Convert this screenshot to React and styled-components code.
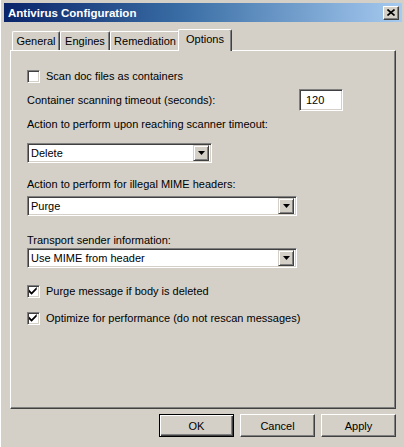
import React from "react";
import styled, { createGlobalStyle } from "styled-components";

const GlobalStyle = createGlobalStyle`
  html, body {
    margin: 0;
    padding: 0;
    background: #d4d0c8;
  }
  body {
    font-family: "Liberation Sans", Arial, sans-serif;
    font-size: 11px;
    color: #000;
  }
`;

const Window = styled.div`
  width: 404px;
  height: 447px;
  box-sizing: border-box;
  padding: 3px 2px 0 3px;
  background: #d4d0c8;
  border-left: 1px solid #fff;
  display: flex;
  flex-direction: column;
`;

const TitleBar = styled.div`
  height: 19px;
  display: flex;
  align-items: center;
  justify-content: space-between;
  padding: 0 3px 0 4px;
  background: linear-gradient(to right, #0a246a 0%, #3a6ea5 45%, #a6caf0 100%);
  color: #fff;
  font-weight: bold;
  font-size: 11.5px;
`;

const CloseButton = styled.div`
  width: 16px;
  height: 14px;
  box-sizing: border-box;
  background: #d4d0c8;
  border: 1px solid;
  border-color: #fff #404040 #404040 #fff;
  box-shadow: inset -1px -1px 0 #808080;
  display: flex;
  align-items: center;
  justify-content: center;
`;

const Body = styled.div`
  flex: 1;
  display: flex;
  flex-direction: column;
  padding: 7px 6px 0 6px;
`;

const TabRow = styled.div`
  display: flex;
  align-items: flex-end;
  height: 21px;
  padding-left: 2px;
  position: relative;
  z-index: 1;
`;

const Tab = styled.div`
  box-sizing: border-box;
  width: ${(p) => p.$w}px;
  height: ${(p) => (p.$active ? "22px" : "19px")};
  margin-bottom: ${(p) => (p.$active ? "-1px" : "0")};
  margin-left: ${(p) => (p.$active ? "-2px" : "0")};
  padding-bottom: ${(p) => (p.$active ? "3px" : "0")};
  display: flex;
  align-items: center;
  justify-content: center;
  background: #d4d0c8;
  border-top: 1px solid #fff;
  border-left: 1px solid #fff;
  border-right: 1px solid #404040;
  box-shadow: inset -1px 0 0 #808080;
  border-radius: 2px 2px 0 0;
  font-size: 11px;
  position: relative;
  z-index: ${(p) => (p.$active ? 2 : 1)};
`;

const Panel = styled.div`
  height: 359px;
  box-sizing: border-box;
  border: 1px solid;
  border-color: #fff #404040 #404040 #fff;
  box-shadow: inset -1px -1px 0 #808080;
  padding: 14px 16px 0 16px;
  display: flex;
  flex-direction: column;
`;

const CheckRow = styled.label`
  display: flex;
  align-items: center;
  gap: 6px;
  height: 14px;
  margin-top: ${(p) => p.$mt || 0}px;
`;

const Box = styled.span`
  width: 13px;
  height: 13px;
  box-sizing: border-box;
  background: #fff;
  border: 1px solid;
  border-color: #808080 #fff #fff #808080;
  box-shadow: inset 1px 1px 0 #404040, inset -1px -1px 0 #d4d0c8;
  display: flex;
  align-items: center;
  justify-content: center;
`;

const FieldRow = styled.div`
  display: flex;
  align-items: center;
  justify-content: space-between;
  margin-top: ${(p) => p.$mt || 0}px;
`;

const Label = styled.div`
  line-height: 14px;
  height: 14px;
  margin-top: ${(p) => p.$mt || 0}px;
`;

const TextBox = styled.div`
  width: 44px;
  height: 22px;
  box-sizing: border-box;
  background: #fff;
  border: 1px solid;
  border-color: #808080 #fff #fff #808080;
  box-shadow: inset 1px 1px 0 #404040, inset -1px -1px 0 #d4d0c8;
  padding: 4px 0 0 6px;
  margin-right: 36px;
`;

const Select = styled.div`
  width: ${(p) => p.$w}px;
  height: 20px;
  box-sizing: border-box;
  background: #fff;
  border: 1px solid;
  border-color: #808080 #fff #fff #808080;
  box-shadow: inset 1px 1px 0 #404040, inset -1px -1px 0 #d4d0c8;
  display: flex;
  align-items: center;
  justify-content: space-between;
  padding: 0 2px 0 3px;
  margin-top: ${(p) => p.$mt || 0}px;
`;

const Arrow = styled.span`
  width: 16px;
  height: 16px;
  box-sizing: border-box;
  background: #d4d0c8;
  border: 1px solid;
  border-color: #d4d0c8 #404040 #404040 #d4d0c8;
  box-shadow: inset 1px 1px 0 #fff, inset -1px -1px 0 #808080;
  display: flex;
  align-items: center;
  justify-content: center;
`;

const Footer = styled.div`
  display: flex;
  justify-content: flex-end;
  gap: 6px;
  padding: 5px 0 0 0;
`;

const Button = styled.div`
  width: 75px;
  height: 23px;
  box-sizing: border-box;
  display: flex;
  align-items: center;
  justify-content: center;
  background: #d4d0c8;
  font-size: 11px;
  border: 1px solid;
  border-color: ${(p) => (p.$default ? "#000" : "#fff #404040 #404040 #fff")};
  box-shadow: ${(p) =>
    p.$default
      ? "inset 1px 1px 0 #fff, inset -1px -1px 0 #404040, inset -2px -2px 0 #808080"
      : "inset -1px -1px 0 #808080"};
`;

const Tick = () => (
  <svg width="9" height="9" viewBox="0 0 7 7">
    <path d="M0 2 L2 4 L6 0 L6 2 L2 6 L0 4 Z" fill="#000" />
  </svg>
);

const DownArrow = () => (
  <svg width="7" height="4" viewBox="0 0 7 4">
    <path d="M0 0 H7 L3.5 4 Z" fill="#000" />
  </svg>
);

const Check = ({ checked, children, mt }) => (
  <CheckRow $mt={mt}>
    <Box>{checked && <Tick />}</Box>
    {children}
  </CheckRow>
);

const Dropdown = ({ w, mt, children }) => (
  <Select $w={w} $mt={mt}>
    <span>{children}</span>
    <Arrow>
      <DownArrow />
    </Arrow>
  </Select>
);

const tabs = [
  { name: "General", w: 48 },
  { name: "Engines", w: 50 },
  { name: "Remediation", w: 70 },
  { name: "Options", w: 54, active: true },
];

export default function App() {
  return (
    <>
      <GlobalStyle />
      <Window>
        <TitleBar>
          <span>Antivirus Configuration</span>
          <CloseButton>
            <svg width="8" height="7" viewBox="0 0 8 7">
              <path d="M0.5 0.5 L7.5 6.5 M7.5 0.5 L0.5 6.5" stroke="#000" strokeWidth="1.6" />
            </svg>
          </CloseButton>
        </TitleBar>
        <Body>
          <TabRow>
            {tabs.map((t) => (
              <Tab key={t.name} $w={t.w} $active={t.active}>
                {t.name}
              </Tab>
            ))}
          </TabRow>
          <Panel>
            <Check mt={4}>Scan doc files as containers</Check>
            <FieldRow $mt={6}>
              <span>Container scanning timeout (seconds):</span>
              <TextBox>120</TextBox>
            </FieldRow>
            <Label $mt={6}>Action to perform upon reaching scanner timeout:</Label>
            <Dropdown w={185} mt={12}>Delete</Dropdown>
            <Label $mt={14}>Action to perform for illegal MIME headers:</Label>
            <Dropdown w={270} mt={5}>Purge</Dropdown>
            <Label $mt={17}>Transport sender information:</Label>
            <Dropdown w={270} mt={1}>Use MIME from header</Dropdown>
            <Check checked mt={16}>Purge message if body is deleted</Check>
            <Check checked mt={13}>Optimize for performance (do not rescan messages)</Check>
          </Panel>
          <Footer>
            <Button $default>OK</Button>
            <Button>Cancel</Button>
            <Button>Apply</Button>
          </Footer>
        </Body>
      </Window>
    </>
  );
}
